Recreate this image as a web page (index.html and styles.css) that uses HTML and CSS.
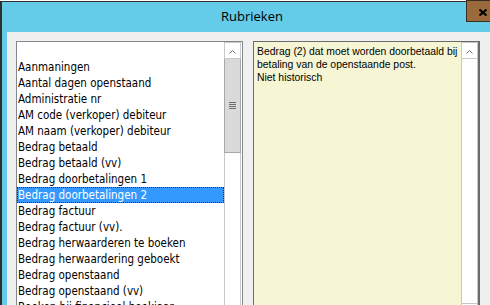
FILE: index.html
```html
<!DOCTYPE html>
<html lang="nl">
<head>
<meta charset="utf-8">
<title>Rubrieken</title>
<link rel="stylesheet" href="styles.css">
</head>
<body>
<div class="window">
  <div class="titlebar">
    <span class="title">Rubrieken</span>
    <div class="close">
      <svg width="8" height="7" viewBox="0 0 8 7"><path d="M0.5 0.5 L7.5 6.5 M7.5 0.5 L0.5 6.5" stroke="#000" stroke-width="2" fill="none"/></svg>
    </div>
  </div>
  <div class="client">
    <div class="listbox">
      <ul class="items">
        <li class="item"></li>
        <li class="item">Aanmaningen</li>
        <li class="item">Aantal dagen openstaand</li>
        <li class="item">Administratie nr</li>
        <li class="item">AM code (verkoper) debiteur</li>
        <li class="item">AM naam (verkoper) debiteur</li>
        <li class="item">Bedrag betaald</li>
        <li class="item">Bedrag betaald (vv)</li>
        <li class="item">Bedrag doorbetalingen 1</li>
        <li class="item selected">Bedrag doorbetalingen 2</li>
        <li class="item">Bedrag factuur</li>
        <li class="item">Bedrag factuur (vv).</li>
        <li class="item">Bedrag herwaarderen te boeken</li>
        <li class="item">Bedrag herwaardering geboekt</li>
        <li class="item">Bedrag openstaand</li>
        <li class="item">Bedrag openstaand (vv)</li>
        <li class="item">Boeken bij financieel boekjaar</li>
      </ul>
      <div class="vscroll">
        <div class="sbtn">
          <svg width="7" height="4" viewBox="0 0 7 4"><polyline points="0.5,3.5 3.5,0.5 6.5,3.5" stroke="#707070" stroke-width="1" fill="none"/></svg>
        </div>
        <div class="thumb"><span class="grip"></span></div>
        <div class="track"></div>
      </div>
    </div>
    <div class="desc">
      <div class="desc-text">Bedrag (2) dat moet worden doorbetaald bij betaling van de openstaande post.<br>Niet historisch</div>
      <div class="vscroll">
        <div class="sbtn">
          <svg width="7" height="4" viewBox="0 0 7 4"><polyline points="0.5,3.5 3.5,0.5 6.5,3.5" stroke="#707070" stroke-width="1" fill="none"/></svg>
        </div>
        <div class="track"></div>
        <div class="sbtn down"></div>
      </div>
    </div>
  </div>
</div>
</body>
</html>
```

FILE: styles.css
```css
html, body {
  margin: 0;
  padding: 0;
  background: #ffffff;
  overflow: hidden;
}

.window {
  box-sizing: border-box;
  width: 502px;
  height: 340px;
  margin-top: 1px;
  border-top: 1px solid #2f2f2f;
  border-left: 2px solid #2f2f2f;
  background: #64cbe8;
  padding: 0 7px 0 5px;
  display: flex;
  flex-direction: column;
}

.titlebar {
  position: relative;
  height: 30px;
  margin: 0 -7px 0 -5px;
  text-align: center;
  font-family: "Open Sans", "Noto Sans", sans-serif;
  font-size: 13px;
  line-height: 29px;
  color: #000;
}

.close {
  position: absolute;
  left: 464px;
  top: -2px;
  box-sizing: border-box;
  width: 34px;
  height: 22px;
  background: #9a6a3c;
  border: 1px solid #3a2e22;
  display: flex;
  align-items: center;
  justify-content: center;
  padding-top: 2px;
}

.close svg {
  display: block;
}

.client {
  flex: 1;
  background: #f0f0f0;
  padding: 9px 0 0 9px;
  display: flex;
  gap: 10px;
  align-items: flex-start;
}

.listbox {
  box-sizing: border-box;
  width: 227px;
  height: 290px;
  border: 1px solid #828790;
  padding-right: 1px;
  background: #fff;
  display: flex;
}

.items {
  flex: 1;
  margin: 0;
  padding: 1px 0 0 0;
  list-style: none;
  overflow: hidden;
  font-family: "DejaVu Sans Condensed", "DejaVu Sans", sans-serif;
  font-stretch: condensed;
  font-size: 11.5px;
  color: #000;
}

.item {
  box-sizing: border-box;
  height: 16px;
  line-height: 16px;
  padding-left: 1px;
  white-space: nowrap;
}

.item.selected {
  background: #3399ff;
  color: #fff;
  outline: 1px dotted #3a2a10;
  outline-offset: -1px;
}

.vscroll {
  box-sizing: border-box;
  width: 17px;
  align-self: stretch;
  display: flex;
  flex-direction: column;
  background: #fff;
}

.sbtn {
  box-sizing: border-box;
  height: 17px;
  flex: none;
  border: 1px solid #c8c8c8;
  background: #fff;
  display: flex;
  align-items: center;
  justify-content: center;
  padding-top: 2px;
}

.sbtn svg {
  display: block;
}

.thumb {
  box-sizing: border-box;
  height: 94px;
  flex: none;
  background: #dadada;
  border: 1px solid #a8a8a8;
  border-top: none;
  display: flex;
  align-items: center;
  justify-content: center;
}

.grip {
  display: block;
  width: 7px;
  height: 7px;
  background: repeating-linear-gradient(to bottom, #6e6e6e 0, #6e6e6e 1px, transparent 1px, transparent 2px);
}

.track {
  flex: 1;
  border-left: 1px solid #c8c8c8;
  border-right: 1px solid #c8c8c8;
}

.desc {
  box-sizing: border-box;
  width: 227px;
  height: 280px;
  border-style: solid;
  border-color: #6b6b6b;
  border-width: 1px 2px 1px 1px;
  background: #f6f6d5;
  display: flex;
}

.desc-text {
  flex: 1;
  padding: 3px 0 0 3px;
  font-family: "Liberation Sans", Arial, sans-serif;
  font-size: 10.4px;
  line-height: 13px;
  color: #000;
}
```
